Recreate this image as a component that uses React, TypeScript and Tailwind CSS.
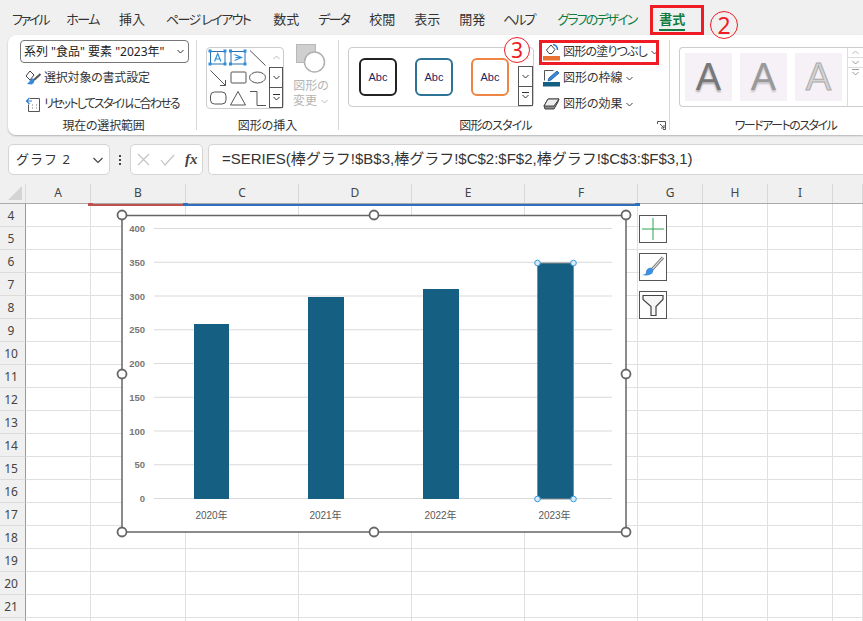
import React from "react";

const tabs: [string, string][] = [
  ["ファイル", "tracking-[-2.2px]"], ["ホーム", "-ml-[1px] tracking-[-1.5px]"], ["挿入", "ml-[1px]"], ["ページ レイアウト", "ml-[2px] tracking-[-1.6px]"], ["数式", "ml-[4px]"],
  ["データ", "tracking-[-1.8px]"], ["校閲", "ml-[1px]"], ["表示", ""], ["開発", ""], ["ヘルプ", "-ml-[1px] tracking-[-2px]"],
];
const cols: [string, string][] = [
  ["A", "w-[65px]"], ["B", "w-[95px]"], ["C", "w-[113px]"], ["D", "w-[113px]"], ["E", "w-[113px]"],
  ["F", "w-[113px]"], ["G", "w-[65px]"], ["H", "w-[65px]"], ["I", "w-[65px]"], ["", "w-[30px]"],
];
const rows = [4, 5, 6, 7, 8, 9, 10, 11, 12, 13, 14, 15, 16, 17, 18, 19, 20, 21, 22];

function Chev({ c = "#444", up = false, bar = false }: { c?: string; up?: boolean; bar?: boolean }) {
  return (
    <svg className="inline-block" width="9" height="9" viewBox="0 0 9 9" fill="none" stroke={c} strokeWidth="1">
      {bar && <path d="M1 1.500h7" />}
      <path d={up ? "M1.500 6l3-3 3 3" : bar ? "M1.500 4l3 3 3-3" : "M1.500 3l3 3 3-3"} />
    </svg>
  );
}

function Scroll({ dim = false }: { dim?: boolean }) {
  const btn = "flex flex-1 items-center justify-center";
  const live = dim ? "#999" : "#333";
  return (
    <div className="flex w-[15px] flex-col self-stretch">
      <div className={btn}><Chev c="#bbb" up /></div>
      <div className={`${btn} ${dim ? "border-y border-[#ddd]" : "border border-[#555]"}`}><Chev c={live} /></div>
      <div className={`${btn} ${dim ? "" : "border border-t-0 border-[#555]"}`}><Chev c={live} bar /></div>
    </div>
  );
}

function Shapes() {
  const dots = [[3, 3], [18, 3], [3, 16], [18, 16], [23.500, 3], [38, 3], [23.500, 16], [38, 16]];
  return (
    <svg width="62" height="60" viewBox="0 0 62 60" fill="none" stroke="#555" strokeWidth="1" className="shrink-0">
      <rect x="3.500" y="3.500" width="14.500" height="12.500" stroke="#2b6fb0" />
      <path d="M7.500 13.500l3.200-8 3.200 8M8.700 11h4" stroke="#2b8fe0" strokeWidth="1.200" />
      <rect x="24" y="3.500" width="14" height="12.500" stroke="#2b6fb0" />
      <path d="M27.500 6.500l7 3-7 3M28.500 9.500h5" stroke="#2b8fe0" strokeWidth="1.200" />
      <g fill="#2b8fe0" stroke="none">
        {dots.map(([x, y], i) => <rect key={i} x={x - 1.500} y={y - 1.500} width="3" height="3" />)}
      </g>
      <path d="M43 2.500l15.500 15" />
      <path d="M3.500 22.500l15 15M18.500 32v5.500h-5.500" />
      <rect x="24" y="24" width="15" height="11" rx="1" />
      <ellipse cx="50.500" cy="29.500" rx="8" ry="5.500" />
      <rect x="3.500" y="44" width="15.500" height="12" rx="4" />
      <path d="M31 43.500l-7.500 13.500h15z" />
      <path d="M43 43.500h7v14h9" />
    </svg>
  );
}

function Abc({ color }: { color: string }) {
  return (
    <div className={`flex h-[38px] w-[38px] items-center justify-center rounded-[6px] border-2 bg-white text-[11px] text-[#1f1f5f] ${color}`}>
      <span className="font-['Liberation_Sans']">Abc</span>
    </div>
  );
}

function WordA({ cls }: { cls: string }) {
  return (
    <div className="flex h-[48px] w-[48px] items-center justify-center bg-[#f5f1f7]">
      <span className={`font-['Liberation_Sans'] text-[38px] leading-none ${cls}`}>A</span>
    </div>
  );
}

function GroupLabel({ children, cls = "" }: { children: React.ReactNode; cls?: string }) {
  return <div className={`absolute inset-x-0 bottom-0 whitespace-nowrap text-center text-[12px] leading-[18px] text-[#333] ${cls}`}>{children}</div>;
}

function Ribbon() {
  return (
    <div className="ml-2 flex h-[100px] rounded-l-[8px] bg-white shadow-[0_1px_2px_rgba(0,0,0,0.25)]">
      {/* Selection */}
      <div className="relative w-[188px] shrink-0">
        <div className="ml-3 mt-[5px] flex h-[23px] w-[169px] items-center justify-between rounded-[4px] border border-[#777] pl-[3px] pr-[3px] text-[12px] text-[#222]">
          <span className="whitespace-nowrap">系列 "食品" 要素 "2023年"</span>
          <Chev c="#333" />
        </div>
        <div className="ml-4 mt-[3px] flex h-[24px] items-center gap-[2px] text-[12px] text-[#333]">
          <svg width="18" height="18" viewBox="0 0 18 18" fill="none">
            <path d="M2 7l4-5 4 4-4 5z" fill="#fff" stroke="#444" />
            <path d="M16.500 5l-6.500 6" stroke="#555" strokeWidth="2" />
            <path d="M10 10c-2-1-4 0-4.500 2.500L3 15l4.500.5c2-.5 3.500-3 2.500-5.500z" fill="#3a87d8" />
          </svg>
          <span className="whitespace-nowrap tracking-[-0.2px]">選択対象の書式設定</span>
        </div>
        <div className="ml-4 mt-[2px] flex h-[24px] items-center gap-[2px] text-[12px] text-[#333]">
          <svg width="18" height="18" viewBox="0 0 18 18" fill="none">
            <path d="M6 3.500h9.500v13h-11v-7" stroke="#555" />
            <path d="M8 6H3M5.500 3L2.500 6l3 3" stroke="#2b7cd3" strokeWidth="1.200" />
            <path d="M8 10h1M8 13h1M12 10h1M12 13h1" stroke="#777" />
          </svg>
          <span className="whitespace-nowrap tracking-[-1.800px]">リセットしてスタイルに合わせる</span>
        </div>
        <GroupLabel cls="pl-[3px] tracking-[-0.2px]">現在の選択範囲</GroupLabel>
      </div>
      <div className="my-[5px] w-px bg-[#d8d8d8]" />

      {/* Insert shapes */}
      <div className="relative w-[141px] shrink-0">
        <div className="ml-[9px] mt-[12px] flex items-start gap-[9px]">
          <div className="flex h-[62px] w-[78px] rounded-[4px] border border-[#ccc]">
            <Shapes />
            <Scroll />
          </div>
          <div className="flex flex-col items-center text-[12px] leading-[15px] text-[#b4b4b4]">
            <svg className="-mt-[3px] mb-[5px]" width="30" height="29" viewBox="0 0 30 29">
              <rect x="0.500" y="0.500" width="19" height="18" fill="#cfcfcf" stroke="#b8b8b8" />
              <circle cx="18.500" cy="18" r="10" fill="#fff" stroke="#b0b0b0" strokeWidth="1.500" />
            </svg>
            <span className="text-center">図形の<br />変更 <Chev c="#bbb" /></span>
          </div>
        </div>
        <GroupLabel>図形の挿入</GroupLabel>
      </div>
      <div className="my-[5px] w-px bg-[#d8d8d8]" />

      {/* Shape styles */}
      <div className="relative w-[330px] shrink-0">
        <div className="ml-[9px] mt-[12px] flex items-start gap-[9px]">
          <div className="flex h-[60px] w-[186px] items-center rounded-[4px] border border-[#ccc] pl-[10px]">
            <div className="flex flex-1 gap-[18px]">
              <Abc color="border-[#222]" />
              <Abc color="border-[#2e7296]" />
              <Abc color="border-[#ee8545]" />
            </div>
            <Scroll />
          </div>
          <div className="-mt-[8px] flex flex-col text-[12px] text-[#333]">
            <div className="flex h-[26px] items-center gap-[3px]">
              <svg width="17" height="18" viewBox="0 0 17 18" fill="none">
                <path d="M3.500 7l4.500-5 4 4.500-3 4H6z" stroke="#444" fill="#fff" />
                <path d="M10 1.500c3 .5 4.500 2.500 4.500 5.500" stroke="#2b7cd3" strokeWidth="1.500" />
                <rect x="0" y="13" width="17" height="4.500" fill="#e97132" />
              </svg>
              <span className="whitespace-nowrap tracking-[-0.8px]">図形の塗りつぶし</span>
              <Chev />
            </div>
            <div className="flex h-[26px] items-center gap-[3px]">
              <svg width="17" height="18" viewBox="0 0 17 18" fill="none">
                <path d="M1.500 1.500h9M1.500 1.500v10" stroke="#555" />
                <path d="M14 2l2 2-8 7-3 1 1-3z" fill="#3a87d8" stroke="#2b6fb0" />
                <rect x="0" y="13" width="17" height="4.500" fill="#156082" />
              </svg>
              <span className="whitespace-nowrap">図形の枠線</span>
              <span className="-ml-[1px]"><Chev /></span>
            </div>
            <div className="flex h-[26px] items-center gap-[3px]">
              <svg width="17" height="18" viewBox="0 0 17 18" fill="none" stroke="#444">
                <path d="M1 11l4-7h11l-1 3-4 7H2z" fill="#888" />
                <path d="M1 11l4-7h11l-5 7z" fill="#eee" />
              </svg>
              <span className="whitespace-nowrap">図形の効果</span>
              <span className="-ml-[1px]"><Chev /></span>
            </div>
          </div>
        </div>
        <GroupLabel cls="pr-[17px] tracking-[-0.9px]">図形のスタイル</GroupLabel>
        <svg className="absolute bottom-[5px] right-[3px]" width="9" height="9" viewBox="0 0 9 9" fill="none" stroke="#555">
          <path d="M.5 3V.5H8.500V8.500H6M3 3l4 4M4 7h3V4" />
        </svg>
      </div>
      <div className="my-[5px] w-px bg-[#d8d8d8]" />

      {/* WordArt */}
      <div className="relative min-w-0 flex-1">
        <div className="ml-[9px] mt-[12px] flex h-[60px] items-center gap-[8px] rounded-l-[4px] border border-r-0 border-[#ccc] pl-[5px]">
          <WordA cls="text-[#777] [text-shadow:0_2px_2px_rgba(0,0,0,0.3)]" />
          <WordA cls="text-[#999] [text-shadow:0_2px_2px_rgba(0,0,0,0.2)]" />
          <WordA cls="text-[#d4d4d4] [-webkit-text-stroke:1px_#aaa]" />
          <div className="-ml-[3px] self-stretch border-l border-[#ddd]"><Scroll dim /></div>
        </div>
        <GroupLabel cls="pl-[38px] tracking-[-1.500px]">ワードアートのスタイル</GroupLabel>
      </div>
    </div>
  );
}

function FormulaBar() {
  return (
    <div className="mt-[9px] flex h-[31px] items-stretch pl-2 text-[#333]">
      <div className="flex w-[102px] items-center justify-between rounded-[5px] border border-[#d4d4d4] bg-white pl-[7px] pr-[5px] text-[13px]">
        <span className="tracking-[1px] [font-feature-settings:normal]">グラフ 2</span>
        <svg width="12" height="12" viewBox="0 0 12 12" fill="none" stroke="#444" strokeWidth="1.200"><path d="M1.500 4l4.500 4.500L10.500 4" /></svg>
      </div>
      <div className="flex w-[20px] items-center justify-center">
        <svg width="4" height="12" viewBox="0 0 4 12" fill="#444"><rect x="1" y="1" width="2" height="2" /><rect x="1" y="5" width="2" height="2" /><rect x="1" y="9" width="2" height="2" /></svg>
      </div>
      <div className="flex w-[73px] items-center gap-[10px] rounded-[5px] border border-[#d4d4d4] bg-white pl-[6px]">
        <svg width="13" height="13" viewBox="0 0 13 13" stroke="#c4c4c4" strokeWidth="1.200"><path d="M1 1l11 11M12 1L1 12" /></svg>
        <svg width="15" height="12" viewBox="0 0 15 12" fill="none" stroke="#c4c4c4" strokeWidth="1.200"><path d="M1 6l4 5L14 1" /></svg>
        <span className="font-['Liberation_Serif'] text-[15px] font-bold italic text-[#444]">fx</span>
      </div>
      <div className="ml-[5px] flex flex-1 items-center rounded-l-[5px] border border-r-0 border-[#d4d4d4] bg-white pb-[1px] pl-[13px] font-['Liberation_Sans','Noto_Sans_CJK_JP',sans-serif] text-[15px] [font-feature-settings:normal]">
        <span className="whitespace-nowrap">=SERIES(棒グラフ!$B$3,棒グラフ!$C$2:$F$2,棒グラフ!$C$3:$F$3,1)</span>
      </div>
    </div>
  );
}

function Sheet() {
  return (
    <div className="mt-[9px]">
      <div className="flex h-[20px] border-b border-[#aaa] bg-[#f0f0f0] text-[12px] text-[#444]">
        <div className="flex w-[26px] shrink-0 items-end justify-end border-r border-[#ddd] p-[3px]">
          <svg width="14" height="14" viewBox="0 0 14 14"><path d="M14 0v14H0z" fill="#d4d4d4" /></svg>
        </div>
        {cols.map(([name, w], i) => (
          <div key={i} className={`flex shrink-0 items-center justify-center border-r border-[#d8d8d8] pb-[2px] ${w}`}>{name}</div>
        ))}
      </div>
      {rows.map((r) => (
        <div key={r} className="flex h-[23px]">
          <div className="flex w-[26px] shrink-0 items-center justify-center border-r border-b border-r-[#999] border-b-[#dcdcdc] bg-[#f0f0f0] pr-[3px] pt-[2px] text-[12px] text-[#444]">{r === 22 ? "" : r}</div>
          {cols.map(([name, w], i) => (
            <div key={i} className={`shrink-0 border-r border-b border-[#e0e0e0] bg-white ${w}`} data-col={name} />
          ))}
        </div>
      ))}
    </div>
  );
}

function Chart() {
  const ticks = [400, 350, 300, 250, 200, 150, 100, 50, 0];
  const bars = [
    { x: 194, w: 35, top: 324, l: "2020年", lx: 211.500 },
    { x: 308, w: 36, top: 297, l: "2021年", lx: 325.500 },
    { x: 423, w: 36, top: 289, l: "2022年", lx: 440.500 },
    { x: 537, w: 36, top: 263, l: "2023年", lx: 554.500 },
  ];
  const handles: [number, number][] = [[122, 215], [374, 215], [626, 215], [122, 374], [626, 374], [122, 532], [374, 532], [626, 532]];
  return (
    <svg className="absolute left-0 top-0" width="863" height="621" viewBox="0 0 863 621" fontFamily="'Liberation Sans','Noto Sans CJK JP',sans-serif">
      <rect x="122" y="215.500" width="504" height="316.500" fill="#fff" stroke="#666" strokeWidth="1.500" />
      {ticks.map((t, i) => {
        const y = 228.500 + i * 33.750;
        return (
          <g key={t}>
            <line x1="154" x2="612" y1={y} y2={y} stroke="#d9d9d9" />
            <text x="145" y={y + 3.500} textAnchor="end" fontSize="9.500" fontWeight="700" fill="#777">{t}</text>
          </g>
        );
      })}
      {bars.map((b) => (
        <g key={b.l}>
          <rect x={b.x} y={b.top} width={b.w} height={499 - b.top} fill="#156082" />
          <text x={b.lx} y="519" textAnchor="middle" fontSize="10" fill="#595959">{b.l}</text>
        </g>
      ))}
      <rect x="537.500" y="263" width="36" height="236" fill="none" stroke="#8a8a8a" />
      {[[537.500, 263], [573.500, 263], [537.500, 499], [573.500, 499]].map(([x, y], i) => (
        <circle key={i} cx={x} cy={y} r="2.800" fill="#d7ecfb" stroke="#3a9ad9" />
      ))}
      {handles.map(([x, y], i) => (
        <circle key={i} cx={x} cy={y} r="4.500" fill="#fff" stroke="#666" strokeWidth="1.800" />
      ))}
    </svg>
  );
}

function SideBtn({ children, top }: { children: React.ReactNode; top: string }) {
  return <div className={`absolute left-[639px] flex h-[28px] w-[28px] items-center justify-center border border-[#555] bg-white ${top}`}>{children}</div>;
}

export default function App() {
  return (
    <div className="relative h-[621px] w-[863px] overflow-hidden bg-[#f0f0f0] font-['Noto_Sans','Noto_Sans_CJK_JP',sans-serif] [font-feature-settings:'palt']">
      {/* Tabs */}
      <div className="flex h-[35px] items-center gap-[19px] pl-3 pt-[5px] text-[13px] text-[#333]">
        {tabs.map(([t, c]) => <span key={t} className={`whitespace-nowrap ${c}`}>{t}</span>)}
        <span className="ml-[4px] whitespace-nowrap tracking-[-1.900px] text-[#107c41]">グラフのデザイン</span>
        <span className="relative ml-[4px] whitespace-nowrap font-bold text-[#107c41]">
          書式
          <span className="absolute -bottom-[1px] left-0 h-[2px] w-full bg-[#107c41]" />
        </span>
      </div>
      <Ribbon />
      <FormulaBar />
      <Sheet />

      {/* Column selection markers */}
      <div className="absolute left-[90px] top-[204px] h-[2px] w-[95px] bg-[#c0504d]" />
      <div className="absolute left-[88px] top-[203px] h-[3px] w-[5px] bg-[#c0504d]" />
      <div className="absolute left-[185px] top-[204px] h-[2px] w-[452px] bg-[#2f6fbf]" />
      <div className="absolute left-[183px] top-[203px] h-[3px] w-[5px] bg-[#2f6fbf]" />
      <div className="absolute left-[635px] top-[203px] h-[3px] w-[5px] bg-[#2f6fbf]" />
      <Chart />

      <SideBtn top="top-[215px]">
        <svg width="22" height="22" viewBox="0 0 22 22" stroke="#2ca44e" strokeWidth="1"><path d="M11 0v22M0 11h22" /></svg>
      </SideBtn>
      <SideBtn top="top-[253px]">
        <svg width="24" height="24" viewBox="0 0 24 24" fill="none">
          <path d="M22 2.500L11 14.500" stroke="#666" strokeWidth="2.800" />
          <path d="M22 2.500L11 14.500" stroke="#ddd" strokeWidth="1.200" />
          <path d="M8 13c3-1 5 1 4 4-1 3-6 4-11 3 3-1 4-1 4-3 0-2 1-3 3-4z" fill="#3f8fdc" />
        </svg>
      </SideBtn>
      <SideBtn top="top-[291px]">
        <svg width="24" height="24" viewBox="0 0 24 24" fill="#f6f6f6" stroke="#444" strokeWidth="1.200"><path d="M2 2.500h20v4l-7 7v9h-5v-9l-8-7z" /></svg>
      </SideBtn>

      {/* Annotations */}
      <div className="absolute left-[650px] top-[5px] h-[30px] w-[54px] border-[3px] border-[#ee1c25]" />
      <div className="absolute left-[539px] top-[40px] h-[25px] w-[120px] border-[3px] border-[#ee1c25]" />
      <div className="absolute left-[504px] top-[37px] flex h-[26px] w-[26px] items-center justify-center rounded-full border border-[#ee1c25] bg-white text-[21px] leading-none text-[#ee1c25]">3</div>
      <div className="absolute left-[710px] top-[11px] flex h-[28px] w-[28px] items-center justify-center rounded-full border border-[#ee1c25] text-[23px] leading-none text-[#ee1c25]">2</div>
    </div>
  );
}
